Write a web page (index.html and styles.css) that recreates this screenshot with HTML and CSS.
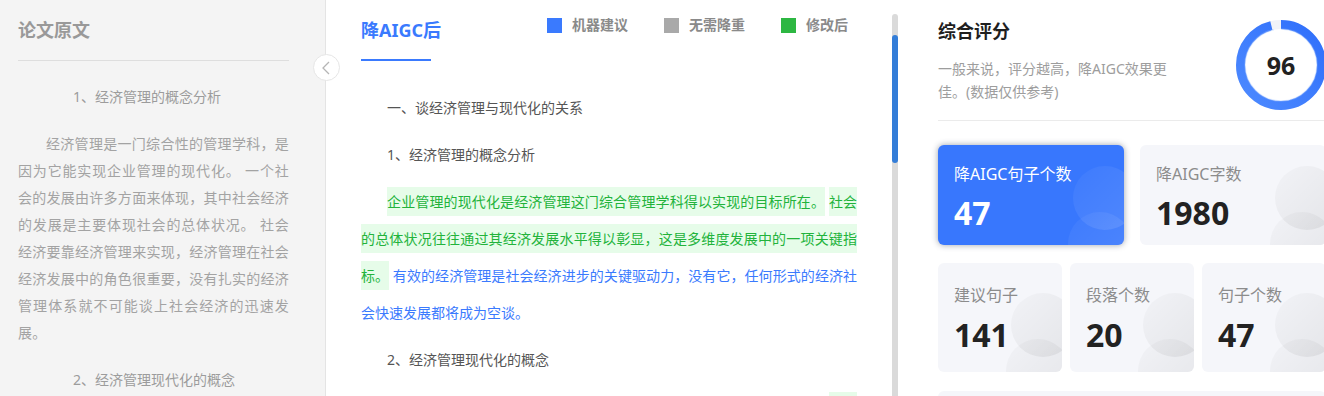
FILE: index.html
```html
<!DOCTYPE html>
<html>
  <head>
    <meta charset="utf-8">
    <title>降AIGC结果</title>
    <link rel="stylesheet" href="styles.css">
  </head>
  <body>
    <div class="origin">
      <h2 class="origin-title">论文原文</h2>
      <p class="origin-head">1、经济管理的概念分析</p>
      <p class="origin-text">经济管理是一门综合性的管理学科，是因为它能实现企业管理的现代化。 一个社会的发展由许多方面来体现，其中社会经济的发展是主要体现社会的总体状况。 社会经济要靠经济管理来实现，经济管理在社会经济发展中的角色很重要，没有扎实的经济管理体系就不可能谈上社会经济的迅速发展。</p>
      <p class="origin-head">2、经济管理现代化的概念</p>
      <div class="fold">
        <svg width="8" height="14" viewBox="0 0 8 14"><polyline points="7,1 1,7 7,13" fill="none" stroke="#b5b5b5" stroke-width="1.3"/></svg>
      </div>
    </div>

    <div class="result">
      <div class="result-top">
        <h2 class="tab">降AIGC后</h2>
        <div class="legend">
          <span class="dot blue"></span>机器建议
          <span class="dot gray"></span>无需降重
          <span class="dot green"></span>修改后
        </div>
      </div>
      <div class="doc">
        <p class="doc-head">一、谈经济管理与现代化的关系</p>
        <p class="doc-head">1、经济管理的概念分析</p>
        <p class="doc-text"><span class="done">企业管理的现代化是经济管理这门综合管理学科得以实现的目标所在。</span> <span class="done">社会的总体状况往往通过其经济发展水平得以彰显，这是多维度发展中的一项关键指标。</span> <span class="tip">有效的经济管理是社会经济进步的关键驱动力，没有它，任何形式的经济社会快速发展都将成为空谈。</span></p>
        <p class="doc-head">2、经济管理现代化的概念</p>
        <p class="doc-text"><span class="keep">经济管理现代化是指运用现代化科学管理思想和方法来管理经济活动。</span> <span class="done">这一过程不仅涉及管理理念的更新，也涉及管理手段的变革。</span></p>
      </div>
    </div>

    <div class="scroll"><div class="thumb"></div></div>

    <div class="score">
      <div class="score-top">
        <div>
          <h2 class="score-title">综合评分</h2>
          <p class="score-desc">一般来说，评分越高，降AIGC效果更佳。(数据仅供参考)</p>
        </div>
        <div class="ring">
          <svg width="90" height="90" viewBox="0 0 90 90">
            <defs>
              <linearGradient id="ringColor" x1="0" y1="0" x2="1" y2="1">
                <stop offset="0" stop-color="#4d8aff"/>
                <stop offset="1" stop-color="#2f6ffb"/>
              </linearGradient>
            </defs>
            <circle cx="45" cy="45" r="40.5" fill="none" stroke="#f1f3f8" stroke-width="9"/>
            <circle cx="45" cy="45" r="40.5" fill="none" stroke="url(#ringColor)" stroke-width="9" stroke-dasharray="244.3 254.5" transform="rotate(-90 45 45)"/>
            <circle cx="45" cy="45" r="36" fill="none" stroke="#9dbfff" stroke-opacity="0.35" stroke-width="1.5" stroke-dasharray="218.5 226.2" transform="rotate(-90 45 45)"/>
          </svg>
          <span class="ring-num">96</span>
        </div>
      </div>

      <div class="cards two">
        <div class="card main">
          <div class="card-label">降AIGC句子个数</div>
          <div class="card-num">47</div>
        </div>
        <div class="card">
          <div class="card-label">降AIGC字数</div>
          <div class="card-num">1980</div>
        </div>
      </div>
      <div class="cards three">
        <div class="card">
          <div class="card-label">建议句子</div>
          <div class="card-num">141</div>
        </div>
        <div class="card">
          <div class="card-label">段落个数</div>
          <div class="card-num">20</div>
        </div>
        <div class="card">
          <div class="card-label">句子个数</div>
          <div class="card-num">47</div>
        </div>
      </div>
      <div class="card wide"></div>
    </div>
  </body>
</html>
```
FILE: styles.css
```css
body {
  margin: 0;
  height: 396px;
  overflow: hidden;
  display: flex;
  background-color: white;
  font-family: "Noto Sans", "Noto Sans CJK SC", sans-serif;
  font-size: 14px;
}
p, h2 {
  margin: 0;
}

/* left: original text */
.origin {
  position: relative;
  flex: none;
  width: 271px;
  padding: 16px 36px 0 18px;
  background-color: #f4f4f4;
  border-right: 1px solid #e4e4e4;
}
.origin-title {
  font-size: 18px;
  line-height: 28px;
  color: #999;
  padding-bottom: 16px;
  border-bottom: 1px solid #dedede;
}
.origin-head {
  margin-top: 22px;
  line-height: 27px;
  text-indent: 55px;
  color: #9c9c9c;
}
.origin-text {
  margin-top: 20px;
  line-height: 27px;
  text-indent: 28px;
  text-align: justify;
  letter-spacing: 0.2px;
  color: #a3a3a3;
}
.origin-text + .origin-head {
  margin-top: 20px;
}
.fold {
  position: absolute;
  top: 54px;
  right: -15px;
  width: 27px;
  height: 27px;
  border: 1px solid #e6e6e6;
  border-radius: 50%;
  background-color: white;
  display: flex;
  align-items: center;
  justify-content: center;
  padding-right: 2px;
  box-sizing: border-box;
}

/* middle: rewritten text */
.result {
  flex: none;
  width: 496px;
  padding: 0 35px;
}
.result-top {
  display: flex;
  align-items: flex-start;
  padding-top: 15px;
}
.tab {
  position: relative;
  margin-top: 2px;
  padding-bottom: 18px;
  font-size: 18px;
  line-height: 26px;
  color: #3a7afe;
}
.tab::after {
  content: "";
  position: absolute;
  left: 0;
  bottom: 0;
  width: 70px;
  height: 2px;
  background-color: #3a7afe;
}
.legend {
  margin-left: auto;
  margin-right: 9px;
  display: flex;
  align-items: center;
  line-height: 20px;
  font-weight: bold;
  color: #8a8a8a;
}
.dot {
  width: 15px;
  height: 15px;
  margin: 0 10px 0 36px;
}
.dot:first-child {
  margin-left: 0;
}
.blue {
  background-color: #3a7afe;
}
.gray {
  background-color: #a9a9a9;
}
.green {
  background-color: #2db742;
}
.doc {
  padding-top: 28px;
}
.doc-head {
  margin-bottom: 10px;
  line-height: 37px;
  text-indent: 26px;
  color: #555;
}
.doc-text {
  margin-bottom: 10px;
  line-height: 37px;
  text-indent: 26px;
  text-align: justify;
}
.done {
  padding: 5px 0;
  color: #22b33b;
  background-color: #e6fce9;
}
.tip {
  color: #3a7afe;
}
.keep {
  color: #555;
}

/* scroll bar of the middle column */
.scroll {
  flex: none;
  width: 6px;
  margin-top: 14px;
  border-radius: 3px 3px 0 0;
  background-color: #dadada;
}
.thumb {
  margin-top: 21px;
  height: 128px;
  border-radius: 3px;
  background-color: #337dd8;
}

/* right: score */
.score {
  flex: none;
  width: 388px;
  padding: 18px 0 0 40px;
}
.score-top {
  display: flex;
  justify-content: space-between;
  padding-bottom: 10px;
  border-bottom: 1px solid #ebebeb;
}
.score-title {
  font-size: 18px;
  line-height: 26px;
  color: #1f1f1f;
}
.score-desc {
  width: 236px;
  margin-top: 13px;
  line-height: 23px;
  color: #9d9d9d;
}
.ring {
  display: grid;
  place-items: center;
  margin-top: 2px;
  width: 90px;
  height: 90px;
}
.ring svg,
.ring-num {
  grid-area: 1 / 1;
}
.ring-num {
  font-size: 25px;
  font-weight: bold;
  color: #222;
}
.cards {
  display: grid;
  gap: 16px;
  margin-top: 24px;
}
.two {
  grid-template-columns: 186px 186px;
  height: 100px;
}
.three {
  grid-template-columns: 124px 124px 124px;
  gap: 8px;
  margin-top: 18px;
  height: 109px;
}
.card {
  position: relative;
  overflow: hidden;
  padding: 18px 0 0 16px;
  border-radius: 6px;
  background-color: #f5f6fa;
}
.three .card {
  padding-top: 21px;
}
.card::before,
.card::after {
  content: "";
  position: absolute;
  width: 64px;
  height: 64px;
  border-radius: 50%;
  background-image: linear-gradient(135deg, rgba(0, 0, 0, 0.015), rgba(0, 0, 0, 0.07));
}
.card::before {
  right: -13px;
  bottom: 15px;
}
.card::after {
  right: -8px;
  bottom: -31px;
}
.card.main {
  background-color: #3877fd;
  box-shadow: 0 0 6px rgba(40, 50, 70, 0.45);
}
.card.main::before,
.card.main::after {
  background-image: linear-gradient(135deg, rgba(255, 255, 255, 0.03), rgba(255, 255, 255, 0.12));
}
.card-label {
  font-size: 16px;
  line-height: 22px;
  color: #8c8c8c;
}
.card-num {
  margin-top: 8px;
  font-size: 32px;
  line-height: 40px;
  font-weight: bold;
  color: #222;
}
.three .card-num {
  margin-top: 9px;
}
.main .card-label,
.main .card-num {
  color: white;
}
.card.wide {
  margin-top: 19px;
  height: 80px;
}
```
